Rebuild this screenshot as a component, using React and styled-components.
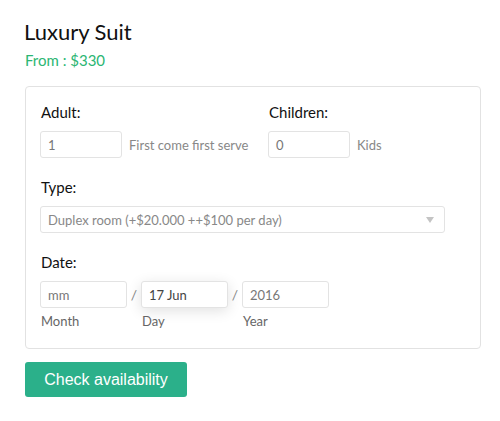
import React from "react";
import styled, { createGlobalStyle } from "styled-components";

const Global = createGlobalStyle`
  html, body { margin: 0; padding: 0; background: #fff; }
  body { font-family: Lato, "Open Sans", sans-serif; color: #111; }
  * { box-sizing: border-box; }
`;

const Page = styled.div`
  padding: 17px 19px 0 25px;
  width: 500px;
`;

const Title = styled.h1`
  margin: 0 0 0 -1px;
  font-size: 22px;
  font-weight: 400;
  line-height: 30px;
  color: #111;
`;

const Price = styled.div`
  margin-top: 3px;
  font-size: 15px;
  line-height: 20px;
  color: #2bb673;
`;

const Card = styled.div`
  margin-top: 16px;
  width: 456px;
  border: 1px solid #e2e2e2;
  border-radius: 4px;
  padding: 15px 15px 19px 14px;
  display: flex;
  flex-direction: column;
  gap: 19px;
`;

const Row = styled.div`
  display: flex;
  align-items: flex-start;
`;

const Field = styled.div`
  display: flex;
  flex-direction: column;
  width: ${(p) => (p.$w ? p.$w + "px" : "auto")};
`;

const Label = styled.div`
  font-size: 15px;
  line-height: 20px;
  color: #111;
  margin-left: 1px;
  margin-bottom: 9px;
`;

const InputLine = styled.div`
  display: flex;
  align-items: center;
  gap: 7px;
`;

const Box = styled.div`
  width: ${(p) => p.$w}px;
  height: 27px;
  border: 1px solid #e3e3e3;
  border-radius: 3px;
  padding: 0 7px;
  display: flex;
  align-items: center;
  font-size: 13px;
  color: ${(p) => (p.$dark ? "#444" : "#777")};
  background: #fff;
  box-shadow: ${(p) => (p.$focus ? "0 3px 14px rgba(0,0,0,0.12)" : "none")};
`;

const Hint = styled.span`
  font-size: 13px;
  color: #888;
`;

const Select = styled.div`
  width: 405px;
  height: 27px;
  border: 1px solid #e3e3e3;
  border-radius: 3px;
  padding: 0 9px 0 7px;
  display: flex;
  align-items: center;
  justify-content: space-between;
  font-size: 13px;
  color: #888;
`;

const Arrow = styled.span`
  width: 0;
  height: 0;
  border-left: 4px solid transparent;
  border-right: 4px solid transparent;
  border-top: 6px solid #c4c4c4;
  margin-right: 1px;
`;

const Slash = styled.span`
  height: 27px;
  width: 14px;
  display: flex;
  align-items: center;
  justify-content: center;
  font-size: 14px;
  color: #888;
`;

const DateGroup = styled.div`
  display: flex;
  flex-direction: column;
`;

const SubLabel = styled.div`
  margin-top: 5px;
  margin-left: 1px;
  font-size: 13px;
  line-height: 16px;
  color: #666;
`;

const Button = styled.button`
  margin-top: 13px;
  width: 162px;
  height: 35px;
  border: none;
  border-radius: 3px;
  background: #2bb08a;
  color: #fff;
  font-family: "Liberation Sans", Arial, sans-serif;
  font-size: 16px;
  padding: 0;
  display: flex;
  align-items: center;
  justify-content: center;
`;

export default function App() {
  return (
    <>
      <Global />
      <Page>
        <Title>Luxury Suit</Title>
        <Price>From : $330</Price>
        <Card>
          <Row>
            <Field $w={228}>
              <Label>Adult:</Label>
              <InputLine>
                <Box $w={82}>1</Box>
                <Hint>First come first serve</Hint>
              </InputLine>
            </Field>
            <Field>
              <Label>Children:</Label>
              <InputLine>
                <Box $w={82}>0</Box>
                <Hint>Kids</Hint>
              </InputLine>
            </Field>
          </Row>
          <Field>
            <Label>Type:</Label>
            <Select>
              <span>Duplex room (+$20.000 ++$100 per day)</span>
              <Arrow />
            </Select>
          </Field>
          <Field>
            <Label>Date:</Label>
            <Row>
              <DateGroup>
                <Box $w={87}>mm</Box>
                <SubLabel>Month</SubLabel>
              </DateGroup>
              <Slash>/</Slash>
              <DateGroup>
                <Box $w={87} $dark $focus>17 Jun</Box>
                <SubLabel>Day</SubLabel>
              </DateGroup>
              <Slash>/</Slash>
              <DateGroup>
                <Box $w={87}>2016</Box>
                <SubLabel>Year</SubLabel>
              </DateGroup>
            </Row>
          </Field>
        </Card>
        <Button>Check availability</Button>
      </Page>
    </>
  );
}
